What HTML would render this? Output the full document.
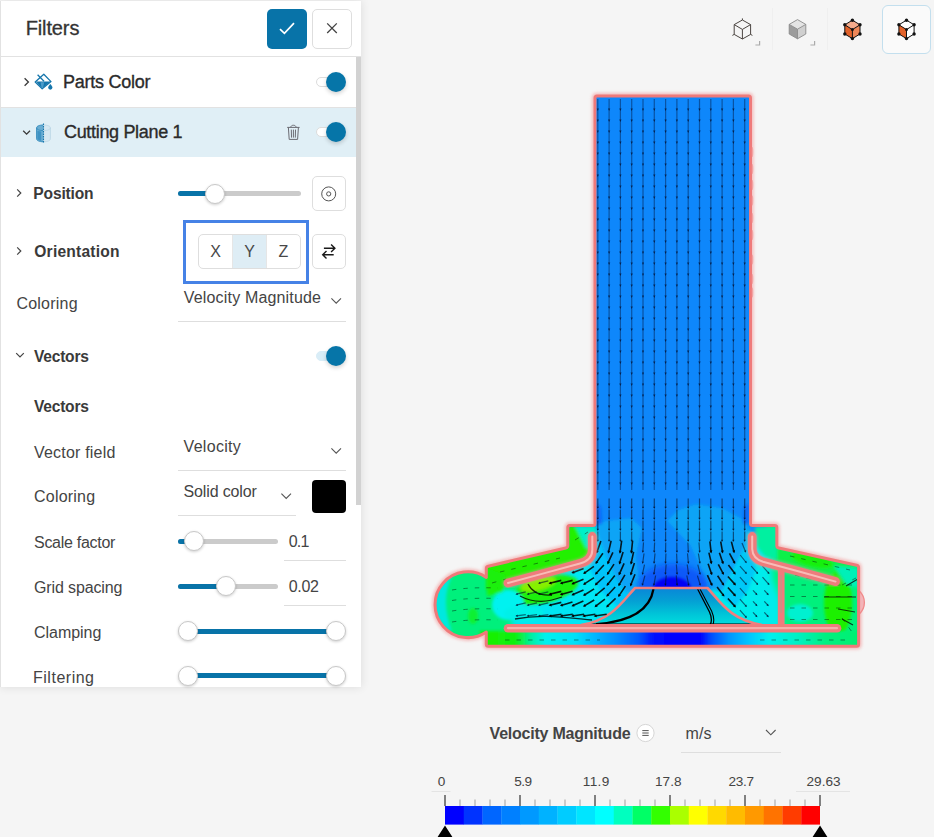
<!DOCTYPE html>
<html lang="en">
<head>
<meta charset="utf-8">
<title>Filters</title>
<style>
*{box-sizing:border-box;margin:0;padding:0}
html,body{width:934px;height:837px;overflow:hidden;background:#f5f5f5;font-family:"Liberation Sans",sans-serif;color:#333}
.abs{position:absolute}
.t{position:absolute;white-space:nowrap;line-height:1}
#panel{position:absolute;left:0;top:1px;width:361px;height:686px;background:#fff;border-left:1px solid #e2e2e2;box-shadow:0 0 9px rgba(0,0,0,.11)}
.btn{position:absolute;border:1px solid #dedede;border-radius:5px;background:#fff}
.track{position:absolute;height:5px;border-radius:3px;background:#cbcbcb}
.fill{position:absolute;height:5px;border-radius:3px;background:#0873a8}
.thumb{position:absolute;width:20px;height:20px;border-radius:50%;background:#fff;border:1px solid #c8c8c8;box-shadow:0 1px 3px rgba(0,0,0,.20)}
.ul{position:absolute;height:1px;background:#dedede}
.tog{position:absolute;width:24px;height:10px;border-radius:5px;background:#fff;border:1px solid #dcdcdc}
.knob{position:absolute;width:20px;height:20px;border-radius:50%;background:#0675a8;box-shadow:0 2px 4px rgba(0,0,0,.18)}
svg{position:absolute;overflow:visible}
</style>
</head>
<body>
<!-- CFD result view -->
<svg style="left:420px;top:80px" width="460" height="580" viewBox="420 80 460 580">
<defs>
<clipPath id="cOut"><path d="M597 96 H748.5 Q750.5 96 750.5 98 V523.5 Q750.5 525.5 752.5 525.5 H774.8 Q776.8 525.5 776.8 527.5 V545.8 Q776.8 547.6 778.8 548 L856.6 565.2 Q858.6 565.6 858.6 567.6 V644.3 Q858.6 646.3 856.6 646.3 H488.3 Q486.3 646.3 486.3 644.3 V632 A32.9 32.9 0 1 1 486.3 577.4 V568.4 Q486.3 566.7 488.3 566.2 L565.8 548 Q567.8 547.6 567.8 545.6 V527.5 Q567.8 525.5 569.8 525.5 H593 Q595 525.5 595 523.5 V98 Q595 96 597 96 Z"/></clipPath>
<clipPath id="cHub"><path d="M635 588 H707.5 C720.5 602 730.5 620 762 625 H581 C612 620 622 602 635 588 Z"/></clipPath>
<filter id="b2" x="-30%" y="-30%" width="160%" height="160%"><feGaussianBlur stdDeviation="1.6"/></filter>
<filter id="b3" x="-30%" y="-30%" width="160%" height="160%"><feGaussianBlur stdDeviation="3"/></filter>
<filter id="b5" x="-30%" y="-30%" width="160%" height="160%"><feGaussianBlur stdDeviation="5"/></filter>
<filter id="gl" x="-10%" y="-10%" width="120%" height="120%"><feGaussianBlur stdDeviation="1.5"/></filter>
<linearGradient id="gHub" x1="0" y1="588" x2="0" y2="625" gradientUnits="userSpaceOnUse"><stop offset="0" stop-color="#0a86d8"/><stop offset=".35" stop-color="#04a0d4"/><stop offset=".7" stop-color="#00c4d8"/><stop offset="1" stop-color="#00dede"/></linearGradient>
<linearGradient id="gBot" x1="486" y1="0" x2="859" y2="0" gradientUnits="userSpaceOnUse"><stop offset="0" stop-color="#14f000"/><stop offset=".08" stop-color="#10f010"/><stop offset=".12" stop-color="#00f0a0"/><stop offset=".16" stop-color="#00f0f0"/><stop offset=".24" stop-color="#00e0f8"/><stop offset=".29" stop-color="#00b8ff"/><stop offset=".345" stop-color="#0090ff"/><stop offset=".41" stop-color="#0058ff"/><stop offset=".453" stop-color="#0008ff"/><stop offset=".574" stop-color="#0000ff"/><stop offset=".606" stop-color="#0050ff"/><stop offset=".654" stop-color="#0098ff"/><stop offset=".708" stop-color="#00c8ff"/><stop offset=".76" stop-color="#00f0f0"/><stop offset=".84" stop-color="#00f0c0"/><stop offset=".91" stop-color="#00f080"/><stop offset="1" stop-color="#00f070"/></linearGradient>
</defs>
<path d="M597 96 H748.5 Q750.5 96 750.5 98 V523.5 Q750.5 525.5 752.5 525.5 H774.8 Q776.8 525.5 776.8 527.5 V545.8 Q776.8 547.6 778.8 548 L856.6 565.2 Q858.6 565.6 858.6 567.6 V644.3 Q858.6 646.3 856.6 646.3 H488.3 Q486.3 646.3 486.3 644.3 V632 A32.9 32.9 0 1 1 486.3 577.4 V568.4 Q486.3 566.7 488.3 566.2 L565.8 548 Q567.8 547.6 567.8 545.6 V527.5 Q567.8 525.5 569.8 525.5 H593 Q595 525.5 595 523.5 V98 Q595 96 597 96 Z" fill="none" stroke="#f29c9c" stroke-width="6.5" opacity=".6" filter="url(#gl)"/>
<g clip-path="url(#cOut)">
<rect x="420" y="80" width="460" height="580" fill="#0e87fb"/>
<g filter="url(#b3)">
<rect x="425" y="540" width="150" height="115" fill="#00f07c"/>
<rect x="765" y="520" width="110" height="135" fill="#00f07c"/>
<path d="M600 528 L575 545 L560 580 L520 600 L510 630 L640 630 L640 590 L615 560 Z" fill="#00e6f4"/>
<path d="M742 528 L770 545 L772 580 L780 600 L782 630 L705 630 L705 590 L730 560 Z" fill="#00ecec"/>
</g>
<g filter="url(#b2)">
<path d="M598 522 L631 518 L642 528 L636 556 L640 585 L628 594 L612 577 L604 555 L598 540 Z" fill="#08a4f6"/>
<path d="M748 522 L722 508 L696 504 L678 510 L667 521 L690 545 L700 566 L708 588 L722 592 L736 565 L746 545 Z" fill="#08a4f6"/>
<path d="M598 535 L606 556 L616 578 L630 597 L618 607 L600 590 L590 570 L594 548 Z" fill="#00c4fa"/>
<path d="M748 538 L740 560 L730 580 L721 597 L735 607 L748 590 L756 570 L752 548 Z" fill="#00c8f8"/>
<path d="M486 566 L568 547 L568 526 L594 526 L594 548 L585 560 L508 580 L500 590 L486 590 Z" fill="#20f000"/>
<path d="M575 526 L596 526 L596 545 L586 548 Z" fill="#00f0c8"/>
<ellipse cx="545" cy="590" rx="34" ry="13" transform="rotate(-14 545 590)" fill="#1cf010"/>
<ellipse cx="538" cy="584" rx="18" ry="6.5" transform="rotate(-14 538 584)" fill="#86f000"/>
<ellipse cx="508" cy="605" rx="16" ry="15" fill="#00f2f0"/>
<ellipse cx="524" cy="614" rx="20" ry="8" fill="#00f0e8"/>
<path d="M487 568 L506 575 L503 592 L487 596 Z" fill="#1cf008"/>
<path d="M434 604 A33 33 0 0 1 452 576 Q440 600 452 632 A33 33 0 0 1 434 604 Z" fill="#00e8e0"/>
<ellipse cx="473" cy="616" rx="5" ry="8" fill="#10f030"/>
<path d="M777 548 L858 566 L858 585 L838 580 L800 568 L777 560 Z" fill="#10f048"/>
<ellipse cx="838" cy="603" rx="14" ry="32" fill="#1cf000"/>
<ellipse cx="812" cy="560" rx="22" ry="7" transform="rotate(14 812 560)" fill="#18f010"/>
<ellipse cx="800" cy="613" rx="13" ry="9" fill="#00f0d0"/>
<path d="M834 566 L858 568 L858 588 L846 584 Z" fill="#00f0b8"/>
<path d="M755 527 L777 527 L777 560 L765 556 L756 545 Z" fill="#00f0a0"/>
</g>
<path d="M596 503 L601 507 L602 524 L596 524 Z M749 503 L744 507 L743 524 L749 524 Z" fill="#0a68f6" filter="url(#b2)"/>
<rect x="480" y="631" width="385" height="17" fill="url(#gBot)" filter="url(#b2)"/>
<g filter="url(#b3)">
<ellipse cx="673" cy="589" rx="36" ry="25" fill="#0a58f8"/>
</g><g filter="url(#b2)">
<ellipse cx="672" cy="589" rx="19" ry="12" fill="#0000f4"/>
</g>
</g>
<path d="M635 588 H707.5 C720.5 602 730.5 620 762 625 H581 C612 620 622 602 635 588 Z" fill="url(#gHub)"/>
<g clip-path="url(#cHub)" fill="none" stroke="#000">
<path d="M653.5 589 C651 604 640 621 596 624.2" stroke-width="2.2"/>
<path d="M697.6 589 L709.5 612 Q713 620 710 625" stroke-width="1.3"/><path d="M700 589 L711.6 611 Q715.4 620 712.6 625" stroke-width="1.1"/>
<path d="M590 624.3 H765" stroke-width="1.6"/>
</g>
<path d="M581 625 C612 620 622 602 635 588 H707.5 C720.5 602 730.5 620 762 625" fill="none" stroke="#f07f7f" stroke-width="2.6" stroke-linejoin="round"/>
<g clip-path="url(#cOut)">
<path d="M597.8 99 V490 M609.1 99 V490 M620.4 99 V490 M631.7 99 V490 M643.0 99 V490 M654.3 99 V490 M665.6 99 V490 M676.9 99 V490 M688.2 99 V490 M699.5 99 V490 M710.8 99 V490 M722.1 99 V490 M733.4 99 V490 M744.7 99 V490" stroke="#04204e" stroke-opacity=".5" stroke-width="1.2" fill="none"/>
<path d="M596.65 108.5 h2.3 l-1.15 2.4 Z M596.65 119.5 h2.3 l-1.15 2.4 Z M596.65 130.5 h2.3 l-1.15 2.4 Z M596.65 141.5 h2.3 l-1.15 2.4 Z M596.65 152.5 h2.3 l-1.15 2.4 Z M596.65 163.5 h2.3 l-1.15 2.4 Z M596.65 174.5 h2.3 l-1.15 2.4 Z M596.65 185.5 h2.3 l-1.15 2.4 Z M596.65 196.5 h2.3 l-1.15 2.4 Z M596.65 207.5 h2.3 l-1.15 2.4 Z M596.65 218.5 h2.3 l-1.15 2.4 Z M596.65 229.5 h2.3 l-1.15 2.4 Z M596.65 240.5 h2.3 l-1.15 2.4 Z M596.65 251.5 h2.3 l-1.15 2.4 Z M596.65 262.5 h2.3 l-1.15 2.4 Z M596.65 273.5 h2.3 l-1.15 2.4 Z M596.65 284.5 h2.3 l-1.15 2.4 Z M596.65 295.5 h2.3 l-1.15 2.4 Z M596.65 306.5 h2.3 l-1.15 2.4 Z M596.65 317.5 h2.3 l-1.15 2.4 Z M596.65 328.5 h2.3 l-1.15 2.4 Z M596.65 339.5 h2.3 l-1.15 2.4 Z M596.65 350.5 h2.3 l-1.15 2.4 Z M596.65 361.5 h2.3 l-1.15 2.4 Z M596.65 372.5 h2.3 l-1.15 2.4 Z M596.65 383.5 h2.3 l-1.15 2.4 Z M596.65 394.5 h2.3 l-1.15 2.4 Z M596.65 405.5 h2.3 l-1.15 2.4 Z M596.65 416.5 h2.3 l-1.15 2.4 Z M596.65 427.5 h2.3 l-1.15 2.4 Z M596.65 438.5 h2.3 l-1.15 2.4 Z M596.65 449.5 h2.3 l-1.15 2.4 Z M596.65 460.5 h2.3 l-1.15 2.4 Z M596.65 471.5 h2.3 l-1.15 2.4 Z M596.65 482.5 h2.3 l-1.15 2.4 Z M607.95 108.5 h2.3 l-1.15 2.4 Z M607.95 119.5 h2.3 l-1.15 2.4 Z M607.95 130.5 h2.3 l-1.15 2.4 Z M607.95 141.5 h2.3 l-1.15 2.4 Z M607.95 152.5 h2.3 l-1.15 2.4 Z M607.95 163.5 h2.3 l-1.15 2.4 Z M607.95 174.5 h2.3 l-1.15 2.4 Z M607.95 185.5 h2.3 l-1.15 2.4 Z M607.95 196.5 h2.3 l-1.15 2.4 Z M607.95 207.5 h2.3 l-1.15 2.4 Z M607.95 218.5 h2.3 l-1.15 2.4 Z M607.95 229.5 h2.3 l-1.15 2.4 Z M607.95 240.5 h2.3 l-1.15 2.4 Z M607.95 251.5 h2.3 l-1.15 2.4 Z M607.95 262.5 h2.3 l-1.15 2.4 Z M607.95 273.5 h2.3 l-1.15 2.4 Z M607.95 284.5 h2.3 l-1.15 2.4 Z M607.95 295.5 h2.3 l-1.15 2.4 Z M607.95 306.5 h2.3 l-1.15 2.4 Z M607.95 317.5 h2.3 l-1.15 2.4 Z M607.95 328.5 h2.3 l-1.15 2.4 Z M607.95 339.5 h2.3 l-1.15 2.4 Z M607.95 350.5 h2.3 l-1.15 2.4 Z M607.95 361.5 h2.3 l-1.15 2.4 Z M607.95 372.5 h2.3 l-1.15 2.4 Z M607.95 383.5 h2.3 l-1.15 2.4 Z M607.95 394.5 h2.3 l-1.15 2.4 Z M607.95 405.5 h2.3 l-1.15 2.4 Z M607.95 416.5 h2.3 l-1.15 2.4 Z M607.95 427.5 h2.3 l-1.15 2.4 Z M607.95 438.5 h2.3 l-1.15 2.4 Z M607.95 449.5 h2.3 l-1.15 2.4 Z M607.95 460.5 h2.3 l-1.15 2.4 Z M607.95 471.5 h2.3 l-1.15 2.4 Z M607.95 482.5 h2.3 l-1.15 2.4 Z M619.25 108.5 h2.3 l-1.15 2.4 Z M619.25 119.5 h2.3 l-1.15 2.4 Z M619.25 130.5 h2.3 l-1.15 2.4 Z M619.25 141.5 h2.3 l-1.15 2.4 Z M619.25 152.5 h2.3 l-1.15 2.4 Z M619.25 163.5 h2.3 l-1.15 2.4 Z M619.25 174.5 h2.3 l-1.15 2.4 Z M619.25 185.5 h2.3 l-1.15 2.4 Z M619.25 196.5 h2.3 l-1.15 2.4 Z M619.25 207.5 h2.3 l-1.15 2.4 Z M619.25 218.5 h2.3 l-1.15 2.4 Z M619.25 229.5 h2.3 l-1.15 2.4 Z M619.25 240.5 h2.3 l-1.15 2.4 Z M619.25 251.5 h2.3 l-1.15 2.4 Z M619.25 262.5 h2.3 l-1.15 2.4 Z M619.25 273.5 h2.3 l-1.15 2.4 Z M619.25 284.5 h2.3 l-1.15 2.4 Z M619.25 295.5 h2.3 l-1.15 2.4 Z M619.25 306.5 h2.3 l-1.15 2.4 Z M619.25 317.5 h2.3 l-1.15 2.4 Z M619.25 328.5 h2.3 l-1.15 2.4 Z M619.25 339.5 h2.3 l-1.15 2.4 Z M619.25 350.5 h2.3 l-1.15 2.4 Z M619.25 361.5 h2.3 l-1.15 2.4 Z M619.25 372.5 h2.3 l-1.15 2.4 Z M619.25 383.5 h2.3 l-1.15 2.4 Z M619.25 394.5 h2.3 l-1.15 2.4 Z M619.25 405.5 h2.3 l-1.15 2.4 Z M619.25 416.5 h2.3 l-1.15 2.4 Z M619.25 427.5 h2.3 l-1.15 2.4 Z M619.25 438.5 h2.3 l-1.15 2.4 Z M619.25 449.5 h2.3 l-1.15 2.4 Z M619.25 460.5 h2.3 l-1.15 2.4 Z M619.25 471.5 h2.3 l-1.15 2.4 Z M619.25 482.5 h2.3 l-1.15 2.4 Z M630.55 108.5 h2.3 l-1.15 2.4 Z M630.55 119.5 h2.3 l-1.15 2.4 Z M630.55 130.5 h2.3 l-1.15 2.4 Z M630.55 141.5 h2.3 l-1.15 2.4 Z M630.55 152.5 h2.3 l-1.15 2.4 Z M630.55 163.5 h2.3 l-1.15 2.4 Z M630.55 174.5 h2.3 l-1.15 2.4 Z M630.55 185.5 h2.3 l-1.15 2.4 Z M630.55 196.5 h2.3 l-1.15 2.4 Z M630.55 207.5 h2.3 l-1.15 2.4 Z M630.55 218.5 h2.3 l-1.15 2.4 Z M630.55 229.5 h2.3 l-1.15 2.4 Z M630.55 240.5 h2.3 l-1.15 2.4 Z M630.55 251.5 h2.3 l-1.15 2.4 Z M630.55 262.5 h2.3 l-1.15 2.4 Z M630.55 273.5 h2.3 l-1.15 2.4 Z M630.55 284.5 h2.3 l-1.15 2.4 Z M630.55 295.5 h2.3 l-1.15 2.4 Z M630.55 306.5 h2.3 l-1.15 2.4 Z M630.55 317.5 h2.3 l-1.15 2.4 Z M630.55 328.5 h2.3 l-1.15 2.4 Z M630.55 339.5 h2.3 l-1.15 2.4 Z M630.55 350.5 h2.3 l-1.15 2.4 Z M630.55 361.5 h2.3 l-1.15 2.4 Z M630.55 372.5 h2.3 l-1.15 2.4 Z M630.55 383.5 h2.3 l-1.15 2.4 Z M630.55 394.5 h2.3 l-1.15 2.4 Z M630.55 405.5 h2.3 l-1.15 2.4 Z M630.55 416.5 h2.3 l-1.15 2.4 Z M630.55 427.5 h2.3 l-1.15 2.4 Z M630.55 438.5 h2.3 l-1.15 2.4 Z M630.55 449.5 h2.3 l-1.15 2.4 Z M630.55 460.5 h2.3 l-1.15 2.4 Z M630.55 471.5 h2.3 l-1.15 2.4 Z M630.55 482.5 h2.3 l-1.15 2.4 Z M641.85 108.5 h2.3 l-1.15 2.4 Z M641.85 119.5 h2.3 l-1.15 2.4 Z M641.85 130.5 h2.3 l-1.15 2.4 Z M641.85 141.5 h2.3 l-1.15 2.4 Z M641.85 152.5 h2.3 l-1.15 2.4 Z M641.85 163.5 h2.3 l-1.15 2.4 Z M641.85 174.5 h2.3 l-1.15 2.4 Z M641.85 185.5 h2.3 l-1.15 2.4 Z M641.85 196.5 h2.3 l-1.15 2.4 Z M641.85 207.5 h2.3 l-1.15 2.4 Z M641.85 218.5 h2.3 l-1.15 2.4 Z M641.85 229.5 h2.3 l-1.15 2.4 Z M641.85 240.5 h2.3 l-1.15 2.4 Z M641.85 251.5 h2.3 l-1.15 2.4 Z M641.85 262.5 h2.3 l-1.15 2.4 Z M641.85 273.5 h2.3 l-1.15 2.4 Z M641.85 284.5 h2.3 l-1.15 2.4 Z M641.85 295.5 h2.3 l-1.15 2.4 Z M641.85 306.5 h2.3 l-1.15 2.4 Z M641.85 317.5 h2.3 l-1.15 2.4 Z M641.85 328.5 h2.3 l-1.15 2.4 Z M641.85 339.5 h2.3 l-1.15 2.4 Z M641.85 350.5 h2.3 l-1.15 2.4 Z M641.85 361.5 h2.3 l-1.15 2.4 Z M641.85 372.5 h2.3 l-1.15 2.4 Z M641.85 383.5 h2.3 l-1.15 2.4 Z M641.85 394.5 h2.3 l-1.15 2.4 Z M641.85 405.5 h2.3 l-1.15 2.4 Z M641.85 416.5 h2.3 l-1.15 2.4 Z M641.85 427.5 h2.3 l-1.15 2.4 Z M641.85 438.5 h2.3 l-1.15 2.4 Z M641.85 449.5 h2.3 l-1.15 2.4 Z M641.85 460.5 h2.3 l-1.15 2.4 Z M641.85 471.5 h2.3 l-1.15 2.4 Z M641.85 482.5 h2.3 l-1.15 2.4 Z M653.15 108.5 h2.3 l-1.15 2.4 Z M653.15 119.5 h2.3 l-1.15 2.4 Z M653.15 130.5 h2.3 l-1.15 2.4 Z M653.15 141.5 h2.3 l-1.15 2.4 Z M653.15 152.5 h2.3 l-1.15 2.4 Z M653.15 163.5 h2.3 l-1.15 2.4 Z M653.15 174.5 h2.3 l-1.15 2.4 Z M653.15 185.5 h2.3 l-1.15 2.4 Z M653.15 196.5 h2.3 l-1.15 2.4 Z M653.15 207.5 h2.3 l-1.15 2.4 Z M653.15 218.5 h2.3 l-1.15 2.4 Z M653.15 229.5 h2.3 l-1.15 2.4 Z M653.15 240.5 h2.3 l-1.15 2.4 Z M653.15 251.5 h2.3 l-1.15 2.4 Z M653.15 262.5 h2.3 l-1.15 2.4 Z M653.15 273.5 h2.3 l-1.15 2.4 Z M653.15 284.5 h2.3 l-1.15 2.4 Z M653.15 295.5 h2.3 l-1.15 2.4 Z M653.15 306.5 h2.3 l-1.15 2.4 Z M653.15 317.5 h2.3 l-1.15 2.4 Z M653.15 328.5 h2.3 l-1.15 2.4 Z M653.15 339.5 h2.3 l-1.15 2.4 Z M653.15 350.5 h2.3 l-1.15 2.4 Z M653.15 361.5 h2.3 l-1.15 2.4 Z M653.15 372.5 h2.3 l-1.15 2.4 Z M653.15 383.5 h2.3 l-1.15 2.4 Z M653.15 394.5 h2.3 l-1.15 2.4 Z M653.15 405.5 h2.3 l-1.15 2.4 Z M653.15 416.5 h2.3 l-1.15 2.4 Z M653.15 427.5 h2.3 l-1.15 2.4 Z M653.15 438.5 h2.3 l-1.15 2.4 Z M653.15 449.5 h2.3 l-1.15 2.4 Z M653.15 460.5 h2.3 l-1.15 2.4 Z M653.15 471.5 h2.3 l-1.15 2.4 Z M653.15 482.5 h2.3 l-1.15 2.4 Z M664.45 108.5 h2.3 l-1.15 2.4 Z M664.45 119.5 h2.3 l-1.15 2.4 Z M664.45 130.5 h2.3 l-1.15 2.4 Z M664.45 141.5 h2.3 l-1.15 2.4 Z M664.45 152.5 h2.3 l-1.15 2.4 Z M664.45 163.5 h2.3 l-1.15 2.4 Z M664.45 174.5 h2.3 l-1.15 2.4 Z M664.45 185.5 h2.3 l-1.15 2.4 Z M664.45 196.5 h2.3 l-1.15 2.4 Z M664.45 207.5 h2.3 l-1.15 2.4 Z M664.45 218.5 h2.3 l-1.15 2.4 Z M664.45 229.5 h2.3 l-1.15 2.4 Z M664.45 240.5 h2.3 l-1.15 2.4 Z M664.45 251.5 h2.3 l-1.15 2.4 Z M664.45 262.5 h2.3 l-1.15 2.4 Z M664.45 273.5 h2.3 l-1.15 2.4 Z M664.45 284.5 h2.3 l-1.15 2.4 Z M664.45 295.5 h2.3 l-1.15 2.4 Z M664.45 306.5 h2.3 l-1.15 2.4 Z M664.45 317.5 h2.3 l-1.15 2.4 Z M664.45 328.5 h2.3 l-1.15 2.4 Z M664.45 339.5 h2.3 l-1.15 2.4 Z M664.45 350.5 h2.3 l-1.15 2.4 Z M664.45 361.5 h2.3 l-1.15 2.4 Z M664.45 372.5 h2.3 l-1.15 2.4 Z M664.45 383.5 h2.3 l-1.15 2.4 Z M664.45 394.5 h2.3 l-1.15 2.4 Z M664.45 405.5 h2.3 l-1.15 2.4 Z M664.45 416.5 h2.3 l-1.15 2.4 Z M664.45 427.5 h2.3 l-1.15 2.4 Z M664.45 438.5 h2.3 l-1.15 2.4 Z M664.45 449.5 h2.3 l-1.15 2.4 Z M664.45 460.5 h2.3 l-1.15 2.4 Z M664.45 471.5 h2.3 l-1.15 2.4 Z M664.45 482.5 h2.3 l-1.15 2.4 Z M675.75 108.5 h2.3 l-1.15 2.4 Z M675.75 119.5 h2.3 l-1.15 2.4 Z M675.75 130.5 h2.3 l-1.15 2.4 Z M675.75 141.5 h2.3 l-1.15 2.4 Z M675.75 152.5 h2.3 l-1.15 2.4 Z M675.75 163.5 h2.3 l-1.15 2.4 Z M675.75 174.5 h2.3 l-1.15 2.4 Z M675.75 185.5 h2.3 l-1.15 2.4 Z M675.75 196.5 h2.3 l-1.15 2.4 Z M675.75 207.5 h2.3 l-1.15 2.4 Z M675.75 218.5 h2.3 l-1.15 2.4 Z M675.75 229.5 h2.3 l-1.15 2.4 Z M675.75 240.5 h2.3 l-1.15 2.4 Z M675.75 251.5 h2.3 l-1.15 2.4 Z M675.75 262.5 h2.3 l-1.15 2.4 Z M675.75 273.5 h2.3 l-1.15 2.4 Z M675.75 284.5 h2.3 l-1.15 2.4 Z M675.75 295.5 h2.3 l-1.15 2.4 Z M675.75 306.5 h2.3 l-1.15 2.4 Z M675.75 317.5 h2.3 l-1.15 2.4 Z M675.75 328.5 h2.3 l-1.15 2.4 Z M675.75 339.5 h2.3 l-1.15 2.4 Z M675.75 350.5 h2.3 l-1.15 2.4 Z M675.75 361.5 h2.3 l-1.15 2.4 Z M675.75 372.5 h2.3 l-1.15 2.4 Z M675.75 383.5 h2.3 l-1.15 2.4 Z M675.75 394.5 h2.3 l-1.15 2.4 Z M675.75 405.5 h2.3 l-1.15 2.4 Z M675.75 416.5 h2.3 l-1.15 2.4 Z M675.75 427.5 h2.3 l-1.15 2.4 Z M675.75 438.5 h2.3 l-1.15 2.4 Z M675.75 449.5 h2.3 l-1.15 2.4 Z M675.75 460.5 h2.3 l-1.15 2.4 Z M675.75 471.5 h2.3 l-1.15 2.4 Z M675.75 482.5 h2.3 l-1.15 2.4 Z M687.05 108.5 h2.3 l-1.15 2.4 Z M687.05 119.5 h2.3 l-1.15 2.4 Z M687.05 130.5 h2.3 l-1.15 2.4 Z M687.05 141.5 h2.3 l-1.15 2.4 Z M687.05 152.5 h2.3 l-1.15 2.4 Z M687.05 163.5 h2.3 l-1.15 2.4 Z M687.05 174.5 h2.3 l-1.15 2.4 Z M687.05 185.5 h2.3 l-1.15 2.4 Z M687.05 196.5 h2.3 l-1.15 2.4 Z M687.05 207.5 h2.3 l-1.15 2.4 Z M687.05 218.5 h2.3 l-1.15 2.4 Z M687.05 229.5 h2.3 l-1.15 2.4 Z M687.05 240.5 h2.3 l-1.15 2.4 Z M687.05 251.5 h2.3 l-1.15 2.4 Z M687.05 262.5 h2.3 l-1.15 2.4 Z M687.05 273.5 h2.3 l-1.15 2.4 Z M687.05 284.5 h2.3 l-1.15 2.4 Z M687.05 295.5 h2.3 l-1.15 2.4 Z M687.05 306.5 h2.3 l-1.15 2.4 Z M687.05 317.5 h2.3 l-1.15 2.4 Z M687.05 328.5 h2.3 l-1.15 2.4 Z M687.05 339.5 h2.3 l-1.15 2.4 Z M687.05 350.5 h2.3 l-1.15 2.4 Z M687.05 361.5 h2.3 l-1.15 2.4 Z M687.05 372.5 h2.3 l-1.15 2.4 Z M687.05 383.5 h2.3 l-1.15 2.4 Z M687.05 394.5 h2.3 l-1.15 2.4 Z M687.05 405.5 h2.3 l-1.15 2.4 Z M687.05 416.5 h2.3 l-1.15 2.4 Z M687.05 427.5 h2.3 l-1.15 2.4 Z M687.05 438.5 h2.3 l-1.15 2.4 Z M687.05 449.5 h2.3 l-1.15 2.4 Z M687.05 460.5 h2.3 l-1.15 2.4 Z M687.05 471.5 h2.3 l-1.15 2.4 Z M687.05 482.5 h2.3 l-1.15 2.4 Z M698.35 108.5 h2.3 l-1.15 2.4 Z M698.35 119.5 h2.3 l-1.15 2.4 Z M698.35 130.5 h2.3 l-1.15 2.4 Z M698.35 141.5 h2.3 l-1.15 2.4 Z M698.35 152.5 h2.3 l-1.15 2.4 Z M698.35 163.5 h2.3 l-1.15 2.4 Z M698.35 174.5 h2.3 l-1.15 2.4 Z M698.35 185.5 h2.3 l-1.15 2.4 Z M698.35 196.5 h2.3 l-1.15 2.4 Z M698.35 207.5 h2.3 l-1.15 2.4 Z M698.35 218.5 h2.3 l-1.15 2.4 Z M698.35 229.5 h2.3 l-1.15 2.4 Z M698.35 240.5 h2.3 l-1.15 2.4 Z M698.35 251.5 h2.3 l-1.15 2.4 Z M698.35 262.5 h2.3 l-1.15 2.4 Z M698.35 273.5 h2.3 l-1.15 2.4 Z M698.35 284.5 h2.3 l-1.15 2.4 Z M698.35 295.5 h2.3 l-1.15 2.4 Z M698.35 306.5 h2.3 l-1.15 2.4 Z M698.35 317.5 h2.3 l-1.15 2.4 Z M698.35 328.5 h2.3 l-1.15 2.4 Z M698.35 339.5 h2.3 l-1.15 2.4 Z M698.35 350.5 h2.3 l-1.15 2.4 Z M698.35 361.5 h2.3 l-1.15 2.4 Z M698.35 372.5 h2.3 l-1.15 2.4 Z M698.35 383.5 h2.3 l-1.15 2.4 Z M698.35 394.5 h2.3 l-1.15 2.4 Z M698.35 405.5 h2.3 l-1.15 2.4 Z M698.35 416.5 h2.3 l-1.15 2.4 Z M698.35 427.5 h2.3 l-1.15 2.4 Z M698.35 438.5 h2.3 l-1.15 2.4 Z M698.35 449.5 h2.3 l-1.15 2.4 Z M698.35 460.5 h2.3 l-1.15 2.4 Z M698.35 471.5 h2.3 l-1.15 2.4 Z M698.35 482.5 h2.3 l-1.15 2.4 Z M709.65 108.5 h2.3 l-1.15 2.4 Z M709.65 119.5 h2.3 l-1.15 2.4 Z M709.65 130.5 h2.3 l-1.15 2.4 Z M709.65 141.5 h2.3 l-1.15 2.4 Z M709.65 152.5 h2.3 l-1.15 2.4 Z M709.65 163.5 h2.3 l-1.15 2.4 Z M709.65 174.5 h2.3 l-1.15 2.4 Z M709.65 185.5 h2.3 l-1.15 2.4 Z M709.65 196.5 h2.3 l-1.15 2.4 Z M709.65 207.5 h2.3 l-1.15 2.4 Z M709.65 218.5 h2.3 l-1.15 2.4 Z M709.65 229.5 h2.3 l-1.15 2.4 Z M709.65 240.5 h2.3 l-1.15 2.4 Z M709.65 251.5 h2.3 l-1.15 2.4 Z M709.65 262.5 h2.3 l-1.15 2.4 Z M709.65 273.5 h2.3 l-1.15 2.4 Z M709.65 284.5 h2.3 l-1.15 2.4 Z M709.65 295.5 h2.3 l-1.15 2.4 Z M709.65 306.5 h2.3 l-1.15 2.4 Z M709.65 317.5 h2.3 l-1.15 2.4 Z M709.65 328.5 h2.3 l-1.15 2.4 Z M709.65 339.5 h2.3 l-1.15 2.4 Z M709.65 350.5 h2.3 l-1.15 2.4 Z M709.65 361.5 h2.3 l-1.15 2.4 Z M709.65 372.5 h2.3 l-1.15 2.4 Z M709.65 383.5 h2.3 l-1.15 2.4 Z M709.65 394.5 h2.3 l-1.15 2.4 Z M709.65 405.5 h2.3 l-1.15 2.4 Z M709.65 416.5 h2.3 l-1.15 2.4 Z M709.65 427.5 h2.3 l-1.15 2.4 Z M709.65 438.5 h2.3 l-1.15 2.4 Z M709.65 449.5 h2.3 l-1.15 2.4 Z M709.65 460.5 h2.3 l-1.15 2.4 Z M709.65 471.5 h2.3 l-1.15 2.4 Z M709.65 482.5 h2.3 l-1.15 2.4 Z M720.95 108.5 h2.3 l-1.15 2.4 Z M720.95 119.5 h2.3 l-1.15 2.4 Z M720.95 130.5 h2.3 l-1.15 2.4 Z M720.95 141.5 h2.3 l-1.15 2.4 Z M720.95 152.5 h2.3 l-1.15 2.4 Z M720.95 163.5 h2.3 l-1.15 2.4 Z M720.95 174.5 h2.3 l-1.15 2.4 Z M720.95 185.5 h2.3 l-1.15 2.4 Z M720.95 196.5 h2.3 l-1.15 2.4 Z M720.95 207.5 h2.3 l-1.15 2.4 Z M720.95 218.5 h2.3 l-1.15 2.4 Z M720.95 229.5 h2.3 l-1.15 2.4 Z M720.95 240.5 h2.3 l-1.15 2.4 Z M720.95 251.5 h2.3 l-1.15 2.4 Z M720.95 262.5 h2.3 l-1.15 2.4 Z M720.95 273.5 h2.3 l-1.15 2.4 Z M720.95 284.5 h2.3 l-1.15 2.4 Z M720.95 295.5 h2.3 l-1.15 2.4 Z M720.95 306.5 h2.3 l-1.15 2.4 Z M720.95 317.5 h2.3 l-1.15 2.4 Z M720.95 328.5 h2.3 l-1.15 2.4 Z M720.95 339.5 h2.3 l-1.15 2.4 Z M720.95 350.5 h2.3 l-1.15 2.4 Z M720.95 361.5 h2.3 l-1.15 2.4 Z M720.95 372.5 h2.3 l-1.15 2.4 Z M720.95 383.5 h2.3 l-1.15 2.4 Z M720.95 394.5 h2.3 l-1.15 2.4 Z M720.95 405.5 h2.3 l-1.15 2.4 Z M720.95 416.5 h2.3 l-1.15 2.4 Z M720.95 427.5 h2.3 l-1.15 2.4 Z M720.95 438.5 h2.3 l-1.15 2.4 Z M720.95 449.5 h2.3 l-1.15 2.4 Z M720.95 460.5 h2.3 l-1.15 2.4 Z M720.95 471.5 h2.3 l-1.15 2.4 Z M720.95 482.5 h2.3 l-1.15 2.4 Z M732.25 108.5 h2.3 l-1.15 2.4 Z M732.25 119.5 h2.3 l-1.15 2.4 Z M732.25 130.5 h2.3 l-1.15 2.4 Z M732.25 141.5 h2.3 l-1.15 2.4 Z M732.25 152.5 h2.3 l-1.15 2.4 Z M732.25 163.5 h2.3 l-1.15 2.4 Z M732.25 174.5 h2.3 l-1.15 2.4 Z M732.25 185.5 h2.3 l-1.15 2.4 Z M732.25 196.5 h2.3 l-1.15 2.4 Z M732.25 207.5 h2.3 l-1.15 2.4 Z M732.25 218.5 h2.3 l-1.15 2.4 Z M732.25 229.5 h2.3 l-1.15 2.4 Z M732.25 240.5 h2.3 l-1.15 2.4 Z M732.25 251.5 h2.3 l-1.15 2.4 Z M732.25 262.5 h2.3 l-1.15 2.4 Z M732.25 273.5 h2.3 l-1.15 2.4 Z M732.25 284.5 h2.3 l-1.15 2.4 Z M732.25 295.5 h2.3 l-1.15 2.4 Z M732.25 306.5 h2.3 l-1.15 2.4 Z M732.25 317.5 h2.3 l-1.15 2.4 Z M732.25 328.5 h2.3 l-1.15 2.4 Z M732.25 339.5 h2.3 l-1.15 2.4 Z M732.25 350.5 h2.3 l-1.15 2.4 Z M732.25 361.5 h2.3 l-1.15 2.4 Z M732.25 372.5 h2.3 l-1.15 2.4 Z M732.25 383.5 h2.3 l-1.15 2.4 Z M732.25 394.5 h2.3 l-1.15 2.4 Z M732.25 405.5 h2.3 l-1.15 2.4 Z M732.25 416.5 h2.3 l-1.15 2.4 Z M732.25 427.5 h2.3 l-1.15 2.4 Z M732.25 438.5 h2.3 l-1.15 2.4 Z M732.25 449.5 h2.3 l-1.15 2.4 Z M732.25 460.5 h2.3 l-1.15 2.4 Z M732.25 471.5 h2.3 l-1.15 2.4 Z M732.25 482.5 h2.3 l-1.15 2.4 Z M743.55 108.5 h2.3 l-1.15 2.4 Z M743.55 119.5 h2.3 l-1.15 2.4 Z M743.55 130.5 h2.3 l-1.15 2.4 Z M743.55 141.5 h2.3 l-1.15 2.4 Z M743.55 152.5 h2.3 l-1.15 2.4 Z M743.55 163.5 h2.3 l-1.15 2.4 Z M743.55 174.5 h2.3 l-1.15 2.4 Z M743.55 185.5 h2.3 l-1.15 2.4 Z M743.55 196.5 h2.3 l-1.15 2.4 Z M743.55 207.5 h2.3 l-1.15 2.4 Z M743.55 218.5 h2.3 l-1.15 2.4 Z M743.55 229.5 h2.3 l-1.15 2.4 Z M743.55 240.5 h2.3 l-1.15 2.4 Z M743.55 251.5 h2.3 l-1.15 2.4 Z M743.55 262.5 h2.3 l-1.15 2.4 Z M743.55 273.5 h2.3 l-1.15 2.4 Z M743.55 284.5 h2.3 l-1.15 2.4 Z M743.55 295.5 h2.3 l-1.15 2.4 Z M743.55 306.5 h2.3 l-1.15 2.4 Z M743.55 317.5 h2.3 l-1.15 2.4 Z M743.55 328.5 h2.3 l-1.15 2.4 Z M743.55 339.5 h2.3 l-1.15 2.4 Z M743.55 350.5 h2.3 l-1.15 2.4 Z M743.55 361.5 h2.3 l-1.15 2.4 Z M743.55 372.5 h2.3 l-1.15 2.4 Z M743.55 383.5 h2.3 l-1.15 2.4 Z M743.55 394.5 h2.3 l-1.15 2.4 Z M743.55 405.5 h2.3 l-1.15 2.4 Z M743.55 416.5 h2.3 l-1.15 2.4 Z M743.55 427.5 h2.3 l-1.15 2.4 Z M743.55 438.5 h2.3 l-1.15 2.4 Z M743.55 449.5 h2.3 l-1.15 2.4 Z M743.55 460.5 h2.3 l-1.15 2.4 Z M743.55 471.5 h2.3 l-1.15 2.4 Z M743.55 482.5 h2.3 l-1.15 2.4 Z" fill="#021030" fill-opacity=".7"/>
<path d="M597.8 498.4L597.8 508.0M597.8 509.4L597.8 519.0M597.8 520.4L597.8 530.0M597.8 531.4L597.8 541.0M609.1 498.4L609.1 508.0M609.1 509.4L609.1 519.0M609.1 520.4L609.1 530.0M609.1 531.4L609.1 541.0M620.4 498.4L620.4 508.0M620.4 509.4L620.4 519.0M620.4 520.4L620.4 530.0M620.4 531.4L620.4 541.0M631.7 498.4L631.7 508.0M631.7 509.4L631.7 519.0M631.7 520.4L631.7 530.0M631.7 531.4L631.7 541.0M643.0 498.4L643.0 508.0M643.0 509.4L643.0 519.0M643.0 520.4L643.0 530.0M643.0 531.4L643.0 541.0M643.5 542.4L642.8 552.0M644.0 553.5L642.7 563.0M644.5 564.6L642.5 573.9M644.9 575.7L642.4 584.9M654.3 498.4L654.3 508.0M654.3 509.4L654.3 519.0M654.3 520.4L654.3 530.0M654.3 531.4L654.3 541.0M654.6 542.4L654.2 552.0M655.0 553.4L654.1 563.0M655.3 564.5L654.0 574.0M655.6 575.5L653.9 585.0M665.6 498.4L665.6 508.0M665.6 509.4L665.6 519.0M665.6 520.4L665.6 530.0M665.6 531.4L665.6 541.0M665.7 542.4L665.6 552.0M665.9 553.4L665.5 563.0M666.1 564.4L665.4 574.0M666.2 575.4L665.4 585.0M676.9 498.4L676.9 508.0M676.9 509.4L676.9 519.0M676.9 520.4L676.9 530.0M676.9 531.4L676.9 541.0M676.8 542.4L676.9 552.0M676.6 553.4L677.0 563.0M676.4 564.4L677.1 574.0M676.3 575.4L677.1 585.0M688.2 498.4L688.2 508.0M688.2 509.4L688.2 519.0M688.2 520.4L688.2 530.0M688.2 531.4L688.2 541.0M687.9 542.4L688.3 552.0M687.5 553.4L688.4 563.0M687.2 564.5L688.5 574.0M686.8 575.5L688.7 585.0M699.5 498.4L699.5 508.0M699.5 509.4L699.5 519.0M699.5 520.4L699.5 530.0M699.5 531.4L699.5 541.0M699.0 542.4L699.7 552.0M698.4 553.5L699.9 563.0M697.8 564.6L700.1 573.9M697.4 575.7L700.2 584.9M710.8 498.4L710.8 508.0M710.8 509.4L710.8 519.0M710.8 520.4L710.8 530.0M710.8 531.4L710.8 541.0M722.1 498.4L722.1 508.0M722.1 509.4L722.1 519.0M722.1 520.4L722.1 530.0M722.1 531.4L722.1 541.0M733.4 498.4L733.4 508.0M733.4 509.4L733.4 519.0M733.4 520.4L733.4 530.0M733.4 531.4L733.4 541.0M744.7 498.4L744.7 508.0M744.7 509.4L744.7 519.0M744.7 520.4L744.7 530.0M744.7 531.4L744.7 541.0M742.0 542.9L745.6 551.8M740.2 555.0L746.2 562.5M739.9 566.2L746.3 573.4M739.9 577.2L746.3 584.4M739.9 588.2L746.3 595.4M739.9 599.2L746.3 606.4M739.9 610.2L746.3 617.4M548.3 580.8L539.0 583.2M548.3 591.8L539.0 594.2M548.3 602.8L539.0 605.2M548.4 614.6L538.9 615.9M537.0 591.8L527.7 594.2M537.0 602.8L527.7 605.2M537.1 614.6L527.6 615.9M525.7 591.8L516.4 594.2M525.7 602.8L516.4 605.2M525.8 614.6L516.3 615.9M751.2 566.2L757.6 573.4M751.2 577.2L757.6 584.4M753.0 590.3L757.0 594.7M753.0 601.3L757.0 605.7M753.0 612.3L757.0 616.7M762.5 566.2L768.9 573.4M762.5 577.2L768.9 584.4M764.3 590.3L768.3 594.7M764.3 601.3L768.3 605.7M764.3 612.3L768.3 616.7" stroke="#03142e" stroke-opacity=".6" stroke-width="1.2" fill="none"/>
<path d="M597.8 509.0L596.6 506.7L598.9 506.7ZM597.8 520.0L596.6 517.7L598.9 517.7ZM597.8 531.0L596.6 528.7L598.9 528.7ZM597.8 542.0L596.6 539.7L598.9 539.7ZM609.1 509.0L607.9 506.7L610.2 506.7ZM609.1 520.0L607.9 517.7L610.2 517.7ZM609.1 531.0L607.9 528.7L610.2 528.7ZM609.1 542.0L607.9 539.7L610.2 539.7ZM620.4 509.0L619.2 506.7L621.5 506.7ZM620.4 520.0L619.2 517.7L621.5 517.7ZM620.4 531.0L619.2 528.7L621.5 528.7ZM620.4 542.0L619.2 539.7L621.5 539.7ZM631.7 509.0L630.5 506.7L632.8 506.7ZM631.7 520.0L630.5 517.7L632.8 517.7ZM631.7 531.0L630.5 528.7L632.8 528.7ZM631.7 542.0L630.5 539.7L632.8 539.7ZM643.0 509.0L641.9 506.7L644.1 506.7ZM643.0 520.0L641.9 517.7L644.1 517.7ZM643.0 531.0L641.9 528.7L644.1 528.7ZM643.0 542.0L641.9 539.7L644.1 539.7ZM642.8 553.0L641.8 550.6L644.1 550.7ZM642.5 563.9L641.7 561.5L644.0 561.8ZM642.3 574.9L641.7 572.4L643.9 572.9ZM642.1 585.8L641.6 583.3L643.8 583.9ZM654.3 509.0L653.1 506.7L655.4 506.7ZM654.3 520.0L653.1 517.7L655.4 517.7ZM654.3 531.0L653.1 528.7L655.4 528.7ZM654.3 542.0L653.1 539.7L655.4 539.7ZM654.2 553.0L653.1 550.6L655.4 550.7ZM654.0 563.9L653.1 561.6L655.3 561.8ZM653.8 574.9L653.0 572.5L655.3 572.8ZM653.7 585.9L653.0 583.4L655.2 583.8ZM665.6 509.0L664.4 506.7L666.7 506.7ZM665.6 520.0L664.4 517.7L666.7 517.7ZM665.6 531.0L664.4 528.7L666.7 528.7ZM665.6 542.0L664.4 539.7L666.7 539.7ZM665.5 553.0L664.4 550.6L666.7 550.7ZM665.5 564.0L664.4 561.6L666.7 561.7ZM665.4 575.0L664.4 572.6L666.7 572.7ZM665.3 585.9L664.4 583.6L666.7 583.8ZM676.9 509.0L675.8 506.7L678.0 506.7ZM676.9 520.0L675.8 517.7L678.0 517.7ZM676.9 531.0L675.8 528.7L678.0 528.7ZM676.9 542.0L675.8 539.7L678.0 539.7ZM677.0 553.0L675.8 550.7L678.1 550.6ZM677.0 564.0L675.8 561.7L678.1 561.6ZM677.1 575.0L675.8 572.7L678.1 572.6ZM677.2 585.9L675.8 583.8L678.1 583.6ZM688.2 509.0L687.0 506.7L689.3 506.7ZM688.2 520.0L687.0 517.7L689.3 517.7ZM688.2 531.0L687.0 528.7L689.3 528.7ZM688.2 542.0L687.0 539.7L689.3 539.7ZM688.4 553.0L687.1 550.7L689.4 550.6ZM688.5 563.9L687.2 561.8L689.4 561.5ZM688.7 574.9L687.2 572.8L689.5 572.5ZM688.8 585.9L687.3 583.9L689.5 583.4ZM699.5 509.0L698.4 506.7L700.6 506.7ZM699.5 520.0L698.4 517.7L700.6 517.7ZM699.5 531.0L698.4 528.7L700.6 528.7ZM699.5 542.0L698.4 539.7L700.6 539.7ZM699.8 553.0L698.4 550.7L700.7 550.6ZM700.0 563.9L698.5 561.8L700.8 561.5ZM700.3 574.9L698.6 572.9L700.9 572.4ZM700.5 585.8L698.7 583.9L700.9 583.3ZM710.8 509.0L709.6 506.7L711.9 506.7ZM710.8 520.0L709.6 517.7L711.9 517.7ZM710.8 531.0L709.6 528.7L711.9 528.7ZM710.8 542.0L709.6 539.7L711.9 539.7ZM722.1 509.0L720.9 506.7L723.2 506.7ZM722.1 520.0L720.9 517.7L723.2 517.7ZM722.1 531.0L720.9 528.7L723.2 528.7ZM722.1 542.0L720.9 539.7L723.2 539.7ZM733.4 509.0L732.2 506.7L734.5 506.7ZM733.4 520.0L732.2 517.7L734.5 517.7ZM733.4 531.0L732.2 528.7L734.5 528.7ZM733.4 542.0L732.2 539.7L734.5 539.7ZM744.7 509.0L743.5 506.7L745.8 506.7ZM744.7 520.0L743.5 517.7L745.8 517.7ZM744.7 531.0L743.5 528.7L745.8 528.7ZM744.7 542.0L743.5 539.7L745.8 539.7ZM746.0 552.7L744.0 551.0L746.2 550.1ZM746.8 563.2L744.5 562.1L746.3 560.7ZM746.9 574.1L744.6 573.2L746.3 571.6ZM746.9 585.1L744.6 584.2L746.3 582.6ZM746.9 596.1L744.6 595.2L746.3 593.6ZM746.9 607.1L744.6 606.2L746.3 604.6ZM746.9 618.1L744.6 617.2L746.3 615.6ZM538.0 583.4L540.0 581.7L540.6 584.0ZM538.0 594.4L540.0 592.7L540.6 595.0ZM538.0 605.4L540.0 603.7L540.6 606.0ZM538.0 616.1L540.1 614.6L540.4 616.9ZM526.7 594.4L528.7 592.7L529.3 595.0ZM526.7 605.4L528.7 603.7L529.3 606.0ZM526.7 616.1L528.8 614.6L529.1 616.9ZM515.4 594.4L517.4 592.7L518.0 595.0ZM515.4 605.4L517.4 603.7L518.0 606.0ZM515.4 616.1L517.5 614.6L517.8 616.9ZM758.2 574.1L755.9 573.2L757.6 571.6ZM758.2 585.1L755.9 584.2L757.6 582.6ZM757.4 595.2L755.0 594.2L756.7 592.7ZM757.4 606.2L755.0 605.2L756.7 603.7ZM757.4 617.2L755.0 616.2L756.7 614.7ZM769.5 574.1L767.2 573.2L768.9 571.6ZM769.5 585.1L767.2 584.2L768.9 582.6ZM768.7 595.2L766.3 594.2L768.0 592.7ZM768.7 606.2L766.3 605.2L768.0 603.7ZM768.7 617.2L766.3 616.2L768.0 614.7Z" fill="#021030" fill-opacity=".75"/>
<path d="M600.9 541.1L596.8 552.4M602.9 553.2L596.1 563.1M603.9 565.0L595.8 573.8M604.4 576.5L595.6 584.6M604.7 587.8L595.5 595.5M604.9 599.1L595.4 606.4M606.7 614.3L594.8 616.0M611.1 540.8L608.4 552.5M612.9 552.4L607.8 563.3M614.0 564.1L607.5 574.1M614.8 575.6L607.2 584.9M615.2 587.0L607.1 595.8M615.6 598.4L606.9 606.7M621.7 540.7L620.0 552.6M623.1 552.0L619.5 563.5M624.1 563.4L619.2 574.3M624.9 574.8L618.9 585.2M625.4 586.1L618.7 596.1M632.6 540.6L631.4 552.6M633.6 551.8L631.1 563.5M634.4 563.0L630.8 574.5M635.0 574.2L630.6 585.4M709.9 541.4L711.1 552.3M708.9 552.6L711.4 563.3M708.1 563.8L711.7 574.2M707.4 575.1L711.9 585.1M720.7 541.5L722.6 552.3M719.4 552.8L723.0 563.2M718.3 564.3L723.4 574.0M717.6 575.7L723.6 584.9M717.1 587.1L723.8 595.8M731.4 541.6L734.1 552.3M729.5 553.3L734.7 563.0M728.4 565.1L735.1 573.8M727.9 576.5L735.2 584.6M727.9 587.5L735.2 595.6M727.9 598.5L735.2 606.6M593.9 566.4L584.0 573.3M594.0 577.7L584.0 584.2M594.1 588.9L584.0 595.2M594.2 600.0L583.9 606.1M595.4 614.3L583.5 616.0M583.6 568.4L572.4 572.7M583.5 579.2L572.4 583.7M583.5 590.0L572.4 594.8M583.4 600.9L572.5 605.8M584.1 614.3L572.2 616.0M572.6 580.4L561.0 583.3M572.6 591.2L561.0 594.4M572.5 601.9L561.0 605.5M572.8 614.3L560.9 616.0M561.3 580.4L549.7 583.3M561.3 591.4L549.7 594.3M561.3 602.4L549.7 605.3M561.5 614.3L549.6 616.0" stroke="#000" stroke-opacity=".85" stroke-width="1.6" fill="none"/>
<path d="M596.4 553.6L596.0 550.2L598.8 551.2ZM595.4 564.1L595.9 560.7L598.4 562.4ZM595.0 574.7L595.9 571.5L598.1 573.5ZM594.7 585.5L595.9 582.3L597.9 584.5ZM594.6 596.3L595.9 593.2L597.8 595.5ZM594.5 607.2L595.9 604.1L597.8 606.5ZM593.6 616.2L596.4 614.3L596.8 617.3ZM608.2 553.7L607.4 550.4L610.3 551.1ZM607.3 564.4L607.2 561.1L610.0 562.3ZM606.8 575.1L607.2 571.8L609.7 573.4ZM606.5 585.9L607.2 582.6L609.5 584.5ZM606.2 596.7L607.2 593.5L609.4 595.5ZM606.1 607.5L607.2 604.4L609.3 606.5ZM619.8 553.8L618.7 550.6L621.7 551.0ZM619.2 564.6L618.6 561.3L621.5 562.2ZM618.7 575.4L618.5 572.1L621.3 573.3ZM618.3 586.2L618.5 582.9L621.1 584.4ZM618.1 597.1L618.5 593.8L621.0 595.4ZM631.3 553.8L630.1 550.6L633.1 550.9ZM630.8 564.7L630.0 561.5L632.9 562.1ZM630.4 575.6L629.9 572.3L632.8 573.2ZM630.1 586.5L629.9 583.2L632.6 584.3ZM711.2 553.4L709.4 550.6L712.4 550.3ZM711.7 564.3L709.5 561.8L712.5 561.1ZM712.1 575.2L709.7 572.9L712.5 571.9ZM712.4 586.1L709.8 584.0L712.5 582.8ZM722.7 553.4L720.8 550.7L723.7 550.2ZM723.4 564.2L721.0 561.9L723.8 560.9ZM723.9 575.0L721.2 573.0L723.8 571.7ZM724.2 585.8L721.3 584.1L723.8 582.5ZM724.5 596.6L721.4 595.2L723.8 593.4ZM734.4 553.3L732.2 550.8L735.1 550.1ZM735.2 564.0L732.5 562.1L735.1 560.7ZM735.7 574.7L732.7 573.2L735.1 571.4ZM736.0 585.5L732.9 584.2L735.1 582.2ZM736.0 596.5L732.9 595.2L735.1 593.2ZM736.0 607.5L732.9 606.2L735.1 604.2ZM583.1 574.0L584.7 571.1L586.4 573.5ZM583.0 584.9L584.7 582.0L586.3 584.5ZM582.9 595.8L584.7 593.0L586.3 595.5ZM582.9 606.8L584.7 603.9L586.2 606.5ZM582.3 616.2L585.1 614.3L585.5 617.3ZM571.3 573.1L573.5 570.6L574.6 573.4ZM571.3 584.2L573.5 581.7L574.7 584.4ZM571.3 595.3L573.5 592.7L574.7 595.5ZM571.4 606.3L573.5 603.7L574.7 606.5ZM571.0 616.2L573.8 614.3L574.2 617.3ZM559.8 583.6L562.4 581.4L563.1 584.4ZM559.8 594.7L562.3 592.5L563.1 595.4ZM559.9 605.8L562.3 603.5L563.2 606.4ZM559.7 616.2L562.5 614.3L562.9 617.3ZM548.5 583.6L551.1 581.4L551.8 584.4ZM548.5 594.6L551.1 592.4L551.8 595.4ZM548.5 605.6L551.1 603.4L551.8 606.4ZM548.4 616.2L551.2 614.3L551.6 617.3Z" fill="#000" fill-opacity=".9"/>
<path d="M824 597 H856 M846 586 L857 579.5 M838 609 L855 612 M842 619 L853 625" stroke="#000" stroke-opacity=".75" stroke-width="1.1" fill="none"/>
<path d="M515 619 C540 614 560 617 592 620 M520 596 C535 604 548 602 562 597 M528 584 C532 592 540 596 552 595" stroke="#000" stroke-opacity=".8" stroke-width="1.3" fill="none"/>
<path d="M452 590 Q470 587 498 588 M452 600.5 Q470 597.5 498 598.5 M452 611 Q470 608 498 609 M452 622 Q470 619 498 620 M492 583 L506 579 M500 572 L560 558 M505 640 L600 640 M575 540 L588 532 M790 585 H855 M790 596.5 H855 M790 608 H855 M790 619.5 H855 M795 575 L835 585 M790 556 L850 570 M760 640 L850 640 M842 585 L856 578 M842 618 L852 632" stroke="#062010" stroke-opacity=".55" stroke-width=".9" stroke-dasharray="4.5 7" fill="none"/>
</g>
<path d="M592.3 536.5 V550 Q592.3 560 580 563.5 Q560 569 540 574.4 L508 583" fill="none" stroke="#f29c9c" stroke-width="10.5" stroke-linecap="round" stroke-linejoin="round" opacity=".5" filter="url(#gl)" clip-path="url(#cOut)"/>
<path d="M752.2 536.5 V549 Q752.6 558.5 763 561.8 Q780 566.5 800 571.7 L835.5 581.6" fill="none" stroke="#f29c9c" stroke-width="10.5" stroke-linecap="round" stroke-linejoin="round" opacity=".5" filter="url(#gl)" clip-path="url(#cOut)"/>
<path d="M508 628.2 H837" fill="none" stroke="#f29c9c" stroke-width="10.5" stroke-linecap="round" stroke-linejoin="round" opacity=".5" filter="url(#gl)" clip-path="url(#cOut)"/>
<path d="M781.2 568 V626" fill="none" stroke="#f29c9c" stroke-width="10.5" stroke-linecap="round" stroke-linejoin="round" opacity=".5" filter="url(#gl)" clip-path="url(#cOut)"/>
<path d="M592.3 536.5 V550 Q592.3 560 580 563.5 Q560 569 540 574.4 L508 583" fill="none" stroke="#ef7c7c" stroke-width="8.8" stroke-linecap="round" stroke-linejoin="round"/>
<path d="M752.2 536.5 V549 Q752.6 558.5 763 561.8 Q780 566.5 800 571.7 L835.5 581.6" fill="none" stroke="#ef7c7c" stroke-width="8.8" stroke-linecap="round" stroke-linejoin="round"/>
<path d="M508 628.2 H837" fill="none" stroke="#ef7c7c" stroke-width="8.6" stroke-linecap="round" stroke-linejoin="round"/>
<path d="M781.2 568 V626" fill="none" stroke="#ef7c7c" stroke-width="6.8" stroke-linecap="round" stroke-linejoin="round"/>
<path d="M592.3 536.5 V550 Q592.3 560 580 563.5 Q560 569 540 574.4 L508 583" fill="none" stroke="#f8bcb8" stroke-width="2" stroke-linecap="round" stroke-linejoin="round"/>
<path d="M752.2 536.5 V549 Q752.6 558.5 763 561.8 Q780 566.5 800 571.7 L835.5 581.6" fill="none" stroke="#f8bcb8" stroke-width="2" stroke-linecap="round" stroke-linejoin="round"/>
<path d="M508 628.2 H837" fill="none" stroke="#f6aeaa" stroke-width="2.2" stroke-linecap="round" stroke-linejoin="round"/>
<path d="M781.2 576 V612" fill="none" stroke="#cf8d84" stroke-width="1.8" stroke-linecap="round" stroke-linejoin="round"/>
<path d="M640 628.2 H760" stroke="#f8cfcb" stroke-width="2.4" fill="none" filter="url(#b2)"/>
<path d="M859.4 591 Q864.4 596 864.4 602.5 Q864.4 609 859.4 614 Z" fill="#f3b4b8" stroke="#f08a8a" stroke-width="1.3"/>
<path d="M597 96 H748.5 Q750.5 96 750.5 98 V523.5 Q750.5 525.5 752.5 525.5 H774.8 Q776.8 525.5 776.8 527.5 V545.8 Q776.8 547.6 778.8 548 L856.6 565.2 Q858.6 565.6 858.6 567.6 V644.3 Q858.6 646.3 856.6 646.3 H488.3 Q486.3 646.3 486.3 644.3 V632 A32.9 32.9 0 1 1 486.3 577.4 V568.4 Q486.3 566.7 488.3 566.2 L565.8 548 Q567.8 547.6 567.8 545.6 V527.5 Q567.8 525.5 569.8 525.5 H593 Q595 525.5 595 523.5 V98 Q595 96 597 96 Z" fill="none" stroke="#ef7a7a" stroke-width="3" stroke-linejoin="round"/>
<g fill="#f08a8a" opacity=".6"><ellipse cx="752.2" cy="152" rx="1.1" ry="5"/><ellipse cx="752.2" cy="169" rx="1.1" ry="5"/><ellipse cx="752.2" cy="185" rx="1.1" ry="5"/><ellipse cx="752.2" cy="200.5" rx="1.1" ry="5"/><ellipse cx="752.2" cy="218" rx="1.1" ry="5"/><ellipse cx="752.2" cy="235" rx="1.1" ry="5"/><ellipse cx="752.2" cy="259.5" rx="1.1" ry="5"/><ellipse cx="752.2" cy="279" rx="1.1" ry="5"/><ellipse cx="752.2" cy="292.5" rx="1.1" ry="5"/></g>
</svg>
<!-- viewport toolbar -->
<div class="abs" style="left:772px;top:8px;width:1px;height:42px;background:#efefef"></div>
<div class="abs" style="left:827px;top:8px;width:1px;height:42px;background:#efefef"></div>
<div class="abs" style="left:882px;top:5px;width:49px;height:49px;border:1px solid #c3dfee;border-radius:6px;background:#fafafa"></div>
<svg style="left:720px;top:0" width="214" height="60" viewBox="720 0 214 60">
  <!-- wireframe cube -->
  <g fill="none" stroke="#4a4440" stroke-width="1">
    <path d="M742.4 20 L750.6 24.6 L750.6 34.4 L742.4 39 L734.2 34.4 L734.2 24.6 Z"/>
    <path d="M734.2 24.6 L742.4 29.4 L750.6 24.6 M742.4 29.4 L742.4 39"/>
    <path d="M742.4 18.4 L742.4 20 M734.2 34.4 L732.4 35.4 M750.6 34.4 L752.4 35.4"/>
  </g>
  <path d="M755.4 45 L759.6 45 L759.6 41" fill="none" stroke="#ababab" stroke-width="1.2"/>
  <!-- solid gray cube -->
  <path d="M797.5 19.6 L805.8 24.4 L797.5 29.2 L789.2 24.4 Z" fill="#e4e4e4"/>
  <path d="M789.2 24.4 L797.5 29.2 L797.5 38.8 L789.2 34 Z" fill="#9c9c9c"/>
  <path d="M805.8 24.4 L797.5 29.2 L797.5 38.8 L805.8 34 Z" fill="#cfcfcf"/>
  <g fill="none" stroke="#8a8a8a" stroke-width=".9">
    <path d="M797.5 19.6 L805.8 24.4 L805.8 34 L797.5 38.8 L789.2 34 L789.2 24.4 Z"/>
    <path d="M789.2 24.4 L797.5 29.2 L805.8 24.4 M797.5 29.2 L797.5 38.8"/>
  </g>
  <path d="M810.4 45 L814.6 45 L814.6 41" fill="none" stroke="#ababab" stroke-width="1.2"/>
  <!-- orange cube -->
  <path d="M852.4 20.2 L860 24.8 L852.4 29.6 L844.8 24.8 Z" fill="#f4ab8c"/>
  <path d="M844.8 24.8 L852.4 29.6 L852.4 38.6 L844.8 34 Z" fill="#e2622a"/>
  <path d="M860 24.8 L852.4 29.6 L852.4 38.6 L860 34 Z" fill="#ee8758"/>
  <g fill="none" stroke="#111" stroke-width="1">
    <path d="M852.4 20.2 L860 24.8 L860 34 L852.4 38.6 L844.8 34 L844.8 24.8 Z"/>
    <path d="M844.8 24.8 L852.4 29.6 L860 24.8 M852.4 29.6 L852.4 38.6"/>
  </g>
  <g fill="#111"><circle cx="852.4" cy="20.2" r="1.7"/><circle cx="860" cy="24.8" r="1.7"/><circle cx="860" cy="34" r="1.7"/><circle cx="852.4" cy="38.6" r="1.7"/><circle cx="844.8" cy="34" r="1.7"/><circle cx="844.8" cy="24.8" r="1.7"/><circle cx="852.4" cy="29.6" r="1.5"/></g>
  <!-- half orange cube (selected) -->
  <path d="M906.5 20.2 L914.1 24.8 L906.5 29.6 L898.9 24.8 Z" fill="#fff"/>
  <path d="M898.9 24.8 L906.5 29.6 L906.5 38.6 L898.9 34 Z" fill="#e2622a"/>
  <path d="M914.1 24.8 L906.5 29.6 L906.5 38.6 L914.1 34 Z" fill="#fff"/>
  <g fill="none" stroke="#111" stroke-width="1">
    <path d="M906.5 20.2 L914.1 24.8 L914.1 34 L906.5 38.6 L898.9 34 L898.9 24.8 Z"/>
    <path d="M898.9 24.8 L906.5 29.6 L914.1 24.8 M906.5 29.6 L906.5 38.6"/>
  </g>
  <g fill="#111"><circle cx="906.5" cy="20.2" r="1.7"/><circle cx="914.1" cy="24.8" r="1.7"/><circle cx="914.1" cy="34" r="1.7"/><circle cx="906.5" cy="38.6" r="1.7"/><circle cx="898.9" cy="34" r="1.7"/><circle cx="898.9" cy="24.8" r="1.7"/><circle cx="906.5" cy="29.6" r="1.5"/></g>
</svg>

<!-- legend -->
<svg style="left:420px;top:715px" width="460" height="122" viewBox="420 715 460 122">
<circle cx="645.5" cy="733" r="8.6" fill="#fff" stroke="#d6d6d6" stroke-width="1"/>
<path d="M642.3 730.6 H648.7 M642.3 733 H648.7 M642.3 735.4 H648.7" stroke="#555" stroke-width="1"/>
<path d="M766 730 L770.8 734.8 L775.6 730" fill="none" stroke="#555" stroke-width="1.1"/>
<path d="M681 752.5 H781" stroke="#dedede" stroke-width="1"/>
<path d="M431.5 791.5 H450.5 M796 791.5 H850" stroke="#e4e4e4" stroke-width="1"/>
<rect x="445.00" y="806" width="19" height="18.6" fill="#0000ff"/>
<rect x="463.75" y="806" width="19" height="18.6" fill="#0033ff"/>
<rect x="482.50" y="806" width="19" height="18.6" fill="#0066ff"/>
<rect x="501.25" y="806" width="19" height="18.6" fill="#0080ff"/>
<rect x="520.00" y="806" width="19" height="18.6" fill="#0099ff"/>
<rect x="538.75" y="806" width="19" height="18.6" fill="#00b2ff"/>
<rect x="557.50" y="806" width="19" height="18.6" fill="#00ccff"/>
<rect x="576.25" y="806" width="19" height="18.6" fill="#00e5ff"/>
<rect x="595.00" y="806" width="19" height="18.6" fill="#00ffff"/>
<rect x="613.75" y="806" width="19" height="18.6" fill="#00ffbf"/>
<rect x="632.50" y="806" width="19" height="18.6" fill="#00ff66"/>
<rect x="651.25" y="806" width="19" height="18.6" fill="#33ff00"/>
<rect x="670.00" y="806" width="19" height="18.6" fill="#aaff00"/>
<rect x="688.75" y="806" width="19" height="18.6" fill="#ffff00"/>
<rect x="707.50" y="806" width="19" height="18.6" fill="#ffd900"/>
<rect x="726.25" y="806" width="19" height="18.6" fill="#ffbb00"/>
<rect x="745.00" y="806" width="19" height="18.6" fill="#ff9900"/>
<rect x="763.75" y="806" width="19" height="18.6" fill="#ff7300"/>
<rect x="782.50" y="806" width="19" height="18.6" fill="#ff3c00"/>
<rect x="801.25" y="806" width="19" height="18.6" fill="#ff0000"/>
<rect x="820" y="805" width="2" height="21" fill="#f5f5f5"/>
<path d="M460.0 799.4 V806 M475.0 799.4 V806 M490.0 799.4 V806 M505.0 799.4 V806 M535.0 799.4 V806 M550.0 799.4 V806 M565.0 799.4 V806 M580.0 799.4 V806 M610.0 799.4 V806 M625.0 799.4 V806 M640.0 799.4 V806 M655.0 799.4 V806 M685.0 799.4 V806 M700.0 799.4 V806 M715.0 799.4 V806 M730.0 799.4 V806 M760.0 799.4 V806 M775.0 799.4 V806 M790.0 799.4 V806 M805.0 799.4 V806" stroke="#b4b4b4" stroke-width="1.3"/>
<path d="M445.0 795 V806 M520.0 795 V806 M595.0 795 V806 M670.0 795 V806 M745.0 795 V806 M820.0 795 V806" stroke="#5a5a5a" stroke-width="1.5"/>
<path d="M445 825.4 L452.4 837 L437.6 837 Z M820 825.4 L827.4 837 L812.6 837 Z" fill="#000"/>
</svg>
<div id="panel"></div>
<!-- header buttons -->
<div class="abs" style="left:267px;top:9px;width:40px;height:40px;border-radius:5px;background:#0873a8"></div>
<svg style="left:267px;top:9px" width="40" height="40" viewBox="0 0 40 40"><path d="M13 20.2 L17.4 24.4 L27 14.2" fill="none" stroke="#fff" stroke-width="1.7"/></svg>
<div class="btn" style="left:312px;top:9px;width:40px;height:40px"></div>
<svg style="left:312px;top:9px" width="40" height="40" viewBox="0 0 40 40"><path d="M15.2 14.4 L24.8 24 M24.8 14.4 L15.2 24" fill="none" stroke="#444" stroke-width="1.3"/></svg>
<div class="abs" style="left:1px;top:56px;width:360px;height:1px;background:#e2e2e2"></div>
<!-- scrollbar -->
<div class="abs" style="left:356px;top:57px;width:5px;height:448px;background:#d2d2d2"></div>
<!-- row: Parts Color -->
<svg style="left:0;top:57px" width="60" height="50" viewBox="0 57 60 50">
  <path d="M24.6 78.2 L28.4 82 L24.6 85.8" fill="none" stroke="#3a3a3a" stroke-width="1.3"/>
  <path d="M43.8 74.3 L51 81.6 L42.2 88.8 L35.2 82 Z" fill="none" stroke="#1676ac" stroke-width="1.3" stroke-linejoin="round"/>
  <path d="M36 81.6 L50.4 81.6 L42.2 88.6 Z" fill="#1676ac"/>
  <path d="M40.6 82.2 L44.2 82.2 L43 88 L41.6 88 Z" fill="#4c9cca"/>
  <path d="M37.6 74.8 L44 81.2" stroke="#1676ac" stroke-width="1.3"/>
  <path d="M50.3 84 C51.6 85.6 52.4 86.6 52.4 87.6 A2.1 2.1 0 0 1 48.2 87.6 C48.2 86.6 49 85.6 50.3 84 Z" fill="#1676ac"/>
</svg>
<div class="tog" style="left:316px;top:77px"></div><div class="knob" style="left:326px;top:72px"></div>
<!-- row: Cutting Plane 1 -->
<div class="abs" style="left:1px;top:107px;width:355px;height:1px;background:#e2e2e2;z-index:1"></div>
<div class="abs" style="left:1px;top:107px;width:355px;height:50px;background:#e0eff6"></div>
<svg style="left:0;top:107px" width="60" height="50" viewBox="0 107 60 50">
  <path d="M23.2 130.8 L26.6 134.2 L30 130.8" fill="none" stroke="#3a3a3a" stroke-width="1.3"/>
  <path d="M43.5 125 C39 125 36.6 126.3 36.6 127.8 L36.6 138.8 C36.6 140.4 39 141.8 43.5 141.8 Z" fill="#6aadd2" stroke="#2f88ba" stroke-width=".9"/>
  <path d="M36.6 127.8 C36.6 129.4 39.4 130.6 43.5 130.6" fill="none" stroke="#2f88ba" stroke-width=".8"/>
  <path d="M37.4 131 L37.4 139 C38.4 140.2 40 140.8 41.2 141 L41.2 131.4 C39.6 131.2 38.2 130.8 37.4 131 Z" fill="#3f93c4"/>
  <path d="M43.5 125 C48 125 50.4 126.3 50.4 127.8 L50.4 138.8 C50.4 140.4 48 141.8 43.5 141.8 Z" fill="#d6e8f2" stroke="#b4d2e3" stroke-width=".7"/>
  <path d="M50.4 127.8 C50.4 129.4 47.6 130.6 43.5 130.6" fill="none" stroke="#b4d2e3" stroke-width=".7"/>
  <path d="M43.5 123.6 L43.5 142.8" stroke="#1676ac" stroke-width="1.1" stroke-dasharray="1.4 1.1"/>
</svg>
<svg style="left:284px;top:120px" width="20" height="24" viewBox="284 120 20 24">
  <path d="M287.2 127.4 L299.6 127.4 M290.8 127.2 C290.8 124.6 296 124.6 296 127.2 M288.4 127.6 L289.2 139.4 L297.6 139.4 L298.4 127.6 M291.3 129.6 L291.5 137.6 M293.4 129.6 L293.4 137.6 M295.5 129.6 L295.3 137.6" fill="none" stroke="#6a6a72" stroke-width="1"/>
</svg>
<div class="tog" style="left:316px;top:127px"></div><div class="knob" style="left:326px;top:122px"></div>
<!-- Position -->
<svg style="left:10px;top:180px" width="20" height="90" viewBox="10 180 20 90">
  <path d="M17.2 189.4 L20.8 193 L17.2 196.6" fill="none" stroke="#444" stroke-width="1.2"/>
  <path d="M17.2 247.4 L20.8 251 L17.2 254.6" fill="none" stroke="#444" stroke-width="1.2"/>
</svg>
<div class="track" style="left:178px;top:191px;width:123px"></div>
<div class="fill" style="left:178px;top:191px;width:38px"></div>
<div class="thumb" style="left:205px;top:183.5px"></div>
<div class="btn" style="left:311.5px;top:176px;width:34.5px;height:34.5px"></div>
<svg style="left:311.5px;top:176.5px" width="34.5" height="34" viewBox="311.5 176.5 34.5 34"><circle cx="328.2" cy="193.4" r="7" fill="none" stroke="#555" stroke-width="1"/><circle cx="328.2" cy="193.4" r="2.1" fill="none" stroke="#555" stroke-width="1"/></svg>
<!-- Orientation -->
<div class="abs" style="left:183px;top:220px;width:126px;height:64px;border:3px solid #4682e6"></div>
<div class="btn" style="left:198px;top:234px;width:102.5px;height:34.5px;overflow:hidden"><div class="abs" style="left:33px;top:0;width:34px;height:33px;background:#deedf5"></div><div class="abs" style="left:33px;top:0;width:1px;height:33px;background:#e6e6e6"></div><div class="abs" style="left:67px;top:0;width:1px;height:33px;background:#e6e6e6"></div></div>
<div class="btn" style="left:311.5px;top:234px;width:34.5px;height:34.5px"></div>
<svg style="left:311.5px;top:234.5px" width="34.5" height="34" viewBox="311.5 234.5 34.5 34"><path d="M323.4 247.7 L334.2 247.7 M330.6 244 L334.4 247.7 L330.6 251.4 M333.2 254.2 L322.4 254.2 M326 250.5 L322.2 254.2 L326 257.9" fill="none" stroke="#1a1a1a" stroke-width="1.4"/></svg>
<!-- Coloring select -->
<svg style="left:325px;top:290px" width="20" height="20" viewBox="325 290 20 20"><path d="M331.4 298.4 L336.2 303.2 L341 298.4" fill="none" stroke="#555" stroke-width="1.1"/></svg>
<div class="ul" style="left:178px;top:321px;width:168px"></div>
<!-- Vectors header -->
<svg style="left:10px;top:345px" width="20" height="20" viewBox="10 345 20 20"><path d="M16.2 353.2 L20 357 L23.8 353.2" fill="none" stroke="#444" stroke-width="1.2"/></svg>
<div class="tog" style="left:316px;top:351px;background:#d9edf7;border-color:#d9edf7"></div><div class="knob" style="left:326px;top:346px"></div>
<!-- Vector field -->
<svg style="left:325px;top:440px" width="20" height="20" viewBox="325 440 20 20"><path d="M331.4 448.4 L336.2 453.2 L341 448.4" fill="none" stroke="#555" stroke-width="1.1"/></svg>
<div class="ul" style="left:178px;top:470px;width:168px"></div>
<!-- Coloring (solid) -->
<svg style="left:275px;top:485px" width="20" height="20" viewBox="275 485 20 20"><path d="M281.4 493.6 L286.2 498.4 L291 493.6" fill="none" stroke="#555" stroke-width="1.1"/></svg>
<div class="ul" style="left:178px;top:515px;width:118px"></div>
<div class="abs" style="left:312px;top:480px;width:33.5px;height:33px;border-radius:4px;background:#000"></div>
<!-- Scale factor -->
<div class="track" style="left:178px;top:538.7px;width:99.5px"></div>
<div class="fill" style="left:178px;top:538.7px;width:14px"></div>
<div class="thumb" style="left:183.7px;top:531.2px"></div>
<div class="ul" style="left:283.5px;top:560px;width:62.5px"></div>
<!-- Grid spacing -->
<div class="track" style="left:178px;top:583.9px;width:99.5px"></div>
<div class="fill" style="left:178px;top:583.9px;width:46px"></div>
<div class="thumb" style="left:215.5px;top:576.4px"></div>
<div class="ul" style="left:283.5px;top:605px;width:62.5px"></div>
<!-- Clamping -->
<div class="fill" style="left:188px;top:628.6px;width:148px;border-radius:0"></div>
<div class="thumb" style="left:177.8px;top:621.1px"></div>
<div class="thumb" style="left:326px;top:621.1px"></div>
<!-- Filtering -->
<div class="fill" style="left:188px;top:673.4px;width:148px;border-radius:0"></div>
<div class="thumb" style="left:177.8px;top:665.9px"></div>
<div class="thumb" style="left:326px;top:665.9px"></div>


<div class="t" style="left:25.70px;top:18px;font-size:20px;color:#333;letter-spacing:-0.124px;-webkit-text-stroke:0.3px #333;">Filters</div>
<div class="t" style="left:63.00px;top:73px;font-size:18px;color:#2b2b2b;letter-spacing:-0.253px;-webkit-text-stroke:0.35px #2b2b2b;">Parts Color</div>
<div class="t" style="left:64.00px;top:123px;font-size:18px;color:#2b2b2b;letter-spacing:-0.327px;-webkit-text-stroke:0.35px #2b2b2b;">Cutting Plane 1</div>
<div class="t" style="left:33.30px;top:186px;font-size:15.6px;color:#3a3a3a;font-weight:700;letter-spacing:-0.169px;">Position</div>
<div class="t" style="left:34.30px;top:244px;font-size:15.6px;color:#3a3a3a;font-weight:700;letter-spacing:0.196px;">Orientation</div>
<div class="t" style="left:16.40px;top:296px;font-size:16px;color:#444;letter-spacing:0.230px;">Coloring</div>
<div class="t" style="left:183.80px;top:290px;font-size:16px;color:#444;letter-spacing:0.170px;">Velocity Magnitude</div>
<div class="t" style="left:210.30px;top:244px;font-size:16px;color:#484848;">X</div>
<div class="t" style="left:244.20px;top:244px;font-size:16px;color:#484848;">Y</div>
<div class="t" style="left:278.40px;top:244px;font-size:16px;color:#484848;">Z</div>
<div class="t" style="left:34.00px;top:349px;font-size:15.6px;color:#3a3a3a;font-weight:700;letter-spacing:-0.245px;">Vectors</div>
<div class="t" style="left:34.00px;top:399px;font-size:15.6px;color:#3a3a3a;font-weight:700;letter-spacing:-0.245px;">Vectors</div>
<div class="t" style="left:34.00px;top:445px;font-size:16px;color:#444;letter-spacing:0.195px;">Vector field</div>
<div class="t" style="left:183.60px;top:439px;font-size:16px;color:#444;letter-spacing:0.294px;">Velocity</div>
<div class="t" style="left:34.00px;top:489px;font-size:16px;color:#444;letter-spacing:0.216px;">Coloring</div>
<div class="t" style="left:183.60px;top:484px;font-size:16px;color:#444;letter-spacing:-0.158px;">Solid color</div>
<div class="t" style="left:34.00px;top:535px;font-size:16px;color:#444;letter-spacing:-0.278px;">Scale factor</div>
<div class="t" style="left:288.70px;top:534px;font-size:16px;color:#444;letter-spacing:-0.822px;">0.1</div>
<div class="t" style="left:34.00px;top:580px;font-size:16px;color:#444;letter-spacing:-0.129px;">Grid spacing</div>
<div class="t" style="left:288.70px;top:579px;font-size:16px;color:#444;letter-spacing:-0.314px;">0.02</div>
<div class="t" style="left:34.00px;top:625px;font-size:16px;color:#444;letter-spacing:-0.041px;">Clamping</div>
<div class="t" style="left:33.00px;top:670px;font-size:16px;color:#444;letter-spacing:0.512px;">Filtering</div>
<div class="t" style="left:489.60px;top:726px;font-size:16px;color:#444;font-weight:700;letter-spacing:-0.230px;">Velocity Magnitude</div>
<div class="t" style="left:685.60px;top:726px;font-size:16px;color:#444;letter-spacing:0.113px;">m/s</div>
<div class="t" style="left:437.80px;top:775px;font-size:13.6px;color:#444;">0</div>
<div class="t" style="left:514.20px;top:775px;font-size:13.6px;color:#444;letter-spacing:-0.468px;">5.9</div>
<div class="t" style="left:582.80px;top:775px;font-size:13.6px;color:#444;letter-spacing:0.337px;">11.9</div>
<div class="t" style="left:655.00px;top:775px;font-size:13.6px;color:#444;letter-spacing:0.034px;">17.8</div>
<div class="t" style="left:728.60px;top:775px;font-size:13.6px;color:#444;letter-spacing:-0.299px;">23.7</div>
<div class="t" style="left:806.50px;top:775px;font-size:13.6px;color:#444;letter-spacing:0.011px;">29.63</div>
</body>
</html>
